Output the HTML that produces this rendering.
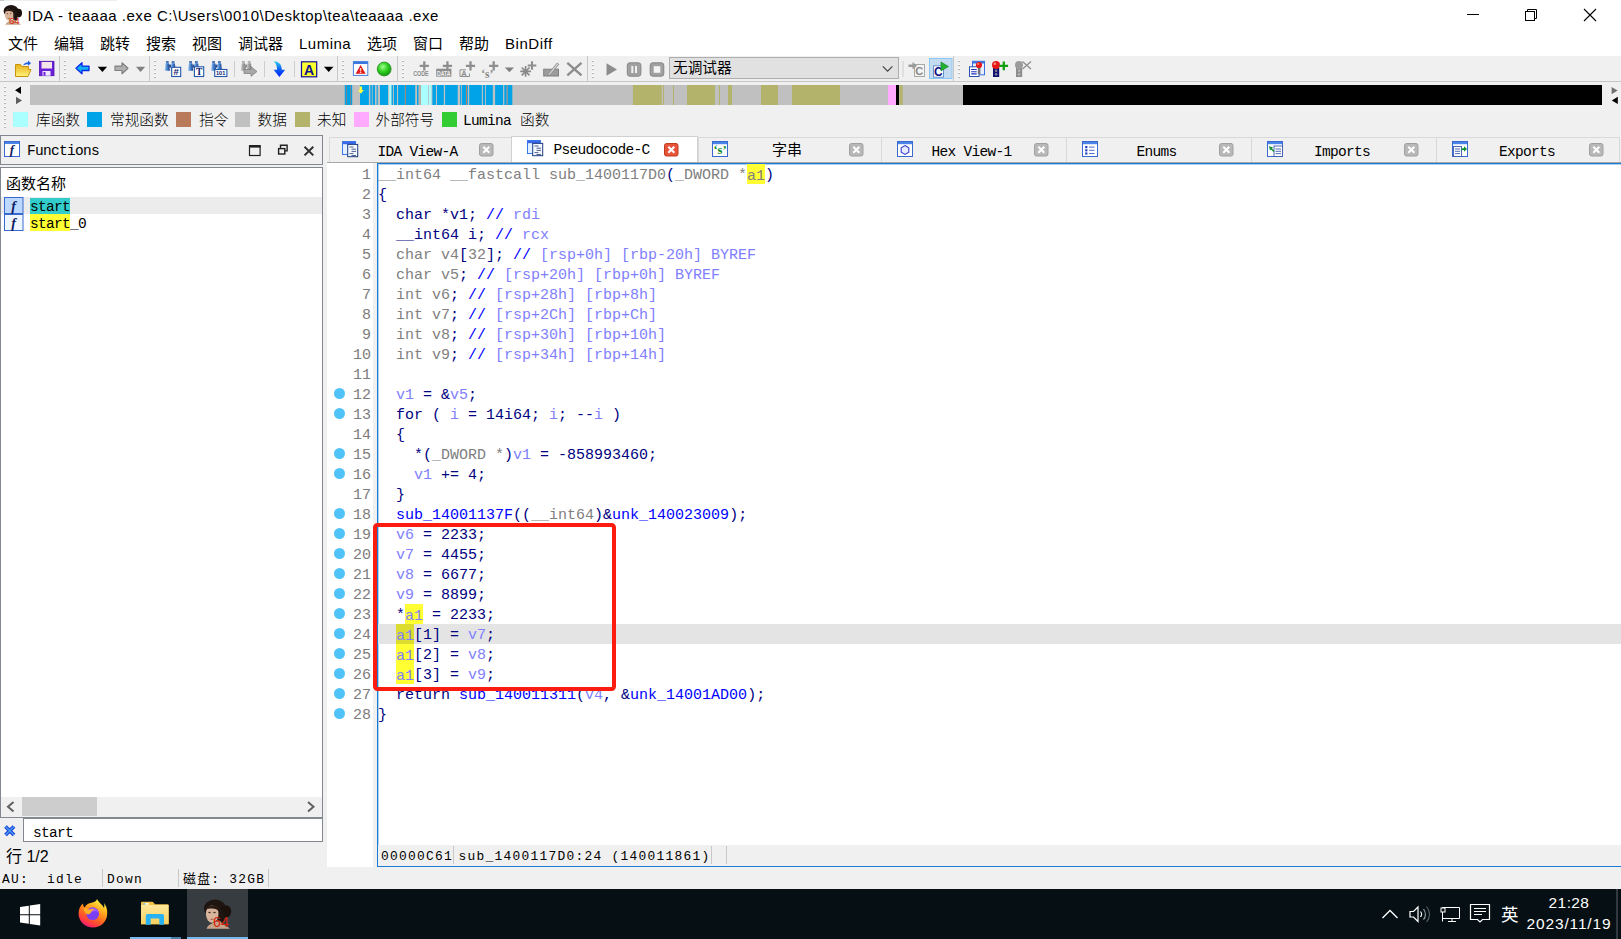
<!DOCTYPE html>
<html><head><meta charset="utf-8"><title>IDA</title>
<style>
*{box-sizing:border-box;margin:0;padding:0}
html,body{width:1621px;height:939px;overflow:hidden;background:#f0f0f0}
body{position:relative;font-family:"Liberation Sans","Noto Sans CJK SC",sans-serif;color:#000}
.abs{position:absolute}
#titlebar{left:0;top:0;width:1621px;height:30px;background:#fff}
#title{left:27.5px;top:6px;font-size:15px;letter-spacing:0.52px;line-height:20px;white-space:pre}
#menubar{left:0;top:30px;width:1621px;height:26px;background:#fff}
#menubar span{position:absolute;top:3.5px;font-size:15px;line-height:20px;white-space:pre}
#toolbar{left:0;top:56px;width:1621px;height:26px;background:#f0f0f0;border-bottom:1px solid #c6c6c6}
.vsep{position:absolute;top:56px;width:1px;height:25px;background:#c8c8c8}
.tsep{position:absolute;top:61px;width:1px;height:16px;background:#cfcfcf}
.grip{position:absolute;width:2px;height:18px;background:repeating-linear-gradient(#fdfdfd 0 1px,#b4b4b4 1px 2px,transparent 2px 4px)}
.mono{font-family:"Liberation Mono","Noto Sans CJK SC",monospace}
.sim{font-family:"Liberation Mono","Noto Sans CJK SC",monospace;font-size:14.5px;letter-spacing:-0.7px;white-space:pre}
.cjk{font-family:"Liberation Sans","Noto Sans CJK SC",sans-serif;font-size:14.67px;white-space:pre}
</style></head><body>
<!-- SECTION:title -->
<div id="titlebar" class="abs"></div>
<svg class="abs" style="left:0;top:0" width="1621" height="30" viewBox="0 0 1621 30">
<rect x="0" y="0" width="117" height="1" fill="#ededed"/><rect x="0" y="0" width="4" height="1" fill="#c8c8c8"/>
<g transform="translate(2.2,4.6)"><g transform="scale(0.68)"><ellipse cx="13" cy="9.5" rx="11" ry="9" fill="#1e1410"/><ellipse cx="24" cy="12.5" rx="5.2" ry="6.3" fill="#1a110d"/><path d="M17 8c4 2 6 8 5 15l-6 1z" fill="#1e1410"/><path d="M4.5 29.8c1.5-4 5-5 8-6.5l5.5-1.5c2 4 7 5 10 8z" fill="#c9a48c"/><ellipse cx="10.2" cy="15" rx="6.3" ry="8.8" fill="#d8b49c"/><path d="M4.5 10c2-4 8-5 12-2l1 5c-2-3-6-4-9-3.5z" fill="#2a1a14"/><ellipse cx="7.5" cy="13.5" rx="1.3" ry="0.7" fill="#4a3428"/><ellipse cx="12.5" cy="13.5" rx="1.3" ry="0.7" fill="#4a3428"/><path d="M8.5 20.3h3" stroke="#a0503c" stroke-width="0.9"/></g><text x="6.7" y="19.1" font-family="Liberation Sans,sans-serif" font-size="9.8" fill="#d82408">64</text></g>
<path d="M1467 14.5h12" stroke="#000" stroke-width="1"/>
<path d="M1527.5 11.5v-2h9v9h-2" fill="none" stroke="#000" stroke-width="1"/><rect x="1525.5" y="11.5" width="9" height="9" fill="none" stroke="#000" stroke-width="1"/>
<path d="M1584 9l12 12M1596 9l-12 12" stroke="#000" stroke-width="1.1"/>
</svg>
<div id="title" class="abs">IDA - teaaaa .exe C:\Users\0010\Desktop\tea\teaaaa .exe</div>
<!-- SECTION:menu -->
<div id="menubar" class="abs">
<span style="left:8px">文件</span><span style="left:54px">编辑</span><span style="left:100px">跳转</span><span style="left:146px">搜索</span><span style="left:192px">视图</span><span style="left:238px">调试器</span><span style="left:299px;letter-spacing:.5px">Lumina</span><span style="left:367px">选项</span><span style="left:413px">窗口</span><span style="left:459px">帮助</span><span style="left:505px;letter-spacing:.55px">BinDiff</span>
</div>
<!-- SECTION:toolbar -->
<div id="toolbar" class="abs"></div>
<svg class="abs" style="left:0;top:56px" width="1621" height="26" viewBox="0 56 1621 26">
<defs>
<linearGradient id="gFold" x1="0" y1="0" x2="0" y2="1"><stop offset="0" stop-color="#e8b018"/><stop offset="1" stop-color="#fff27a"/></linearGradient>
<linearGradient id="gBino" x1="0" y1="0" x2="1" y2="0"><stop offset="0" stop-color="#a8d0f8"/><stop offset="0.45" stop-color="#4a86d0"/><stop offset="1" stop-color="#163c88"/></linearGradient>
<linearGradient id="gBinoG" x1="0" y1="0" x2="1" y2="0"><stop offset="0" stop-color="#d0d0d0"/><stop offset="0.5" stop-color="#9a9a9a"/><stop offset="1" stop-color="#808080"/></linearGradient>
<linearGradient id="gDown" x1="0" y1="0" x2="0" y2="1"><stop offset="0" stop-color="#30d0f0"/><stop offset="0.5" stop-color="#1060f0"/><stop offset="1" stop-color="#0020ff"/></linearGradient>
<radialGradient id="gGreen" cx="0.4" cy="0.35" r="0.7"><stop offset="0" stop-color="#a0ff90"/><stop offset="0.5" stop-color="#30d020"/><stop offset="1" stop-color="#109010"/></radialGradient>


</defs>
<!-- folder open -->
<path d="M15.5 64.5h5l1.5 2h6.5v3h2.5l-3 7h-12.5z" fill="url(#gFold)" stroke="#c89410" stroke-width="1"/>
<path d="M23 65.5c1-2.5 3-3.3 5-3.3v-1.6l3 2.6-3 2.6v-1.6c-1.6 0-3.2.4-5 1.3z" fill="#2060e0"/>
<!-- save -->
<rect x="39.5" y="61.3" width="14.5" height="14.4" fill="#6a20d8" stroke="#5010b0" stroke-width="0.8"/>
<rect x="41.5" y="62" width="10.5" height="6.5" fill="#f4e4e8"/>
<rect x="42.5" y="71" width="8" height="4.7" fill="#f0e8ff"/><rect x="43.5" y="72" width="2" height="3.7" fill="#6a20d8"/>
<!-- back arrow -->
<path d="M76 68.3l6-5.5v3.3h7v4.4h-7v3.3z" fill="#10b0f0" stroke="#0828e8" stroke-width="1.3" stroke-linejoin="round"/>
<path d="M97.7 66.8h9.4l-4.7 5.2z" fill="#000"/>
<path d="M128 68.3l-6-5.5v3.3h-7v4.4h7v3.3z" fill="#b0b0b0" stroke="#808080" stroke-width="1.2" stroke-linejoin="round"/>
<path d="M136 66.8h9.2l-4.6 5.2z" fill="#808080"/>
<!-- binoculars -->
<g transform="translate(164.7,61)"><rect x="1.2" y="0" width="2.8" height="2.6" fill="#4878c0"/><rect x="7" y="0" width="2.8" height="2.6" fill="#4878c0"/><rect x="4.4" y="3.6" width="2.4" height="3" fill="#2a4a90"/><path d="M.9 2.4h3.5l.8 7.4H0z" fill="url(#gBino)"/><path d="M6.7 2.4h3.5l.8 7.4H5.8z" fill="url(#gBino)"/></g>
<rect x="171.7" y="67.3" width="9" height="9.2" fill="#fff" stroke="#2458a8" stroke-width="1.1"/>
<text x="176.2" y="75.4" text-anchor="middle" font-family="Liberation Sans,sans-serif" font-weight="bold" font-size="9.5" fill="#102070">#</text>
<g transform="translate(188,61)"><rect x="1.2" y="0" width="2.8" height="2.6" fill="#4878c0"/><rect x="7" y="0" width="2.8" height="2.6" fill="#4878c0"/><rect x="4.4" y="3.6" width="2.4" height="3" fill="#2a4a90"/><path d="M.9 2.4h3.5l.8 7.4H0z" fill="url(#gBino)"/><path d="M6.7 2.4h3.5l.8 7.4H5.8z" fill="url(#gBino)"/></g>
<rect x="194.4" y="66.8" width="9.3" height="9.7" fill="#fff" stroke="#2458a8" stroke-width="1.1"/>
<text x="199.1" y="75.3" text-anchor="middle" font-family="Liberation Serif,serif" font-weight="bold" font-size="9.5" fill="#102070">T</text>
<g transform="translate(211,61)"><rect x="1.2" y="0" width="2.8" height="2.6" fill="#4878c0"/><rect x="7" y="0" width="2.8" height="2.6" fill="#4878c0"/><rect x="4.4" y="3.6" width="2.4" height="3" fill="#2a4a90"/><path d="M.9 2.4h3.5l.8 7.4H0z" fill="url(#gBino)"/><path d="M6.7 2.4h3.5l.8 7.4H5.8z" fill="url(#gBino)"/></g>
<rect x="214.7" y="69.5" width="12.2" height="7" fill="#fff" stroke="#2458a8" stroke-width="1.1"/>
<text x="216" y="75.3" font-family="Liberation Sans,sans-serif" font-weight="bold" font-size="5.6" fill="#102070">101</text>
<rect x="234" y="61" width="1" height="16" fill="#cdcdcd"/>
<g transform="translate(240.8,61)"><rect x="1.2" y="0" width="2.8" height="2.6" fill="#b0b0b0"/><rect x="7" y="0" width="2.8" height="2.6" fill="#b0b0b0"/><rect x="4.4" y="3.6" width="2.4" height="3" fill="#909090"/><path d="M.9 2.4h3.5l.8 7.4H0z" fill="url(#gBinoG)"/><path d="M6.7 2.4h3.5l.8 7.4H5.8z" fill="url(#gBinoG)"/></g>
<path d="M244 69.5h7v-2.8l6 4.8-6 4.8v-2.8h-7z" fill="#a8a8a8" stroke="#808080" stroke-width="0.8"/>
<rect x="264" y="61" width="1" height="16" fill="#cdcdcd"/>
<!-- blue down arrow -->
<path d="M273.5 61.2c5 0 8.3 2.8 8.3 8.6h3.4l-5.8 7.2-5.8-7.2h3.4c0-4-1-6.6-3.5-8.6z" fill="url(#gDown)"/>
<rect x="294" y="61" width="1" height="16" fill="#cdcdcd"/>
<!-- A -->
<rect x="301.5" y="61.8" width="15.2" height="15" fill="#ffff30" stroke="#101090" stroke-width="1.2"/>
<text x="309.1" y="74.6" text-anchor="middle" font-family="Liberation Sans,sans-serif" font-weight="bold" font-size="14" fill="#101090">A</text>
<path d="M323.9 66.8h9.6l-4.8 5.2z" fill="#000"/>
<!-- red triangle window -->
<rect x="353.4" y="61.6" width="14.4" height="13.8" fill="#fff" stroke="#4a80e0" stroke-width="1"/>
<rect x="353.4" y="61.6" width="14.4" height="2.4" fill="#3a78e0"/>
<path d="M360.6 65l5 8.8h-10z" fill="#e01818"/>
<text x="360.6" y="73.2" text-anchor="middle" font-family="Liberation Sans,sans-serif" font-weight="bold" font-size="7" fill="#fff">!</text>
<!-- green -->
<circle cx="384.2" cy="69" r="6.9" fill="url(#gGreen)" stroke="#208a18" stroke-width="0.8"/>
<!-- gray icons: CODE -->
<path d="M424.3 61.300000000000004v9.2M419.7 65.9h9.2" stroke="#8e8e8e" stroke-width="2.3" fill="none"/><path d="M447.4 61.300000000000004v9.2M442.79999999999995 65.9h9.2" stroke="#8e8e8e" stroke-width="2.3" fill="none"/><path d="M470.5 61.300000000000004v9.2M465.9 65.9h9.2" stroke="#8e8e8e" stroke-width="2.3" fill="none"/><path d="M493.7 61.300000000000004v9.2M489.09999999999997 65.9h9.2" stroke="#8e8e8e" stroke-width="2.3" fill="none"/><path d="M532 61.2v8.6M527.7 65.5h8.6" stroke="#8e8e8e" stroke-width="2.1" fill="none"/>
<text x="413.2" y="76.2" font-family="Liberation Sans,sans-serif" font-weight="bold" font-size="8" fill="#8a8a8a" textLength="15.5" lengthAdjust="spacingAndGlyphs">CODE</text>
<rect x="436.2" y="68.7" width="15.2" height="8" fill="#8e8e8e"/>
<text x="437" y="75.8" font-family="Liberation Sans,sans-serif" font-weight="bold" font-size="7.5" fill="#f0f0f0" textLength="13.6" lengthAdjust="spacingAndGlyphs">DATA</text>
<path d="M466 69.8h-6v6.7h9.5v-3" fill="none" stroke="#8e8e8e" stroke-width="1"/>
<text x="461.2" y="76" font-family="Liberation Sans,sans-serif" font-weight="bold" font-size="7.5" fill="#8a8a8a">A</text>
<text x="481.2" y="77.5" font-family="Liberation Serif,serif" font-weight="bold" font-size="11.5" fill="#8a8a8a">‘s’</text>
<path d="M504.8 67.6h9.2l-4.6 4.6z" fill="#808080"/>
<path d="M521.7 67.5l7.8 7.8M529.5 67.5l-7.8 7.8M525.6 66v10.8M520.2 71.400h10.8" stroke="#8a8a8a" stroke-width="1.7" fill="none"/>
<rect x="543.7" y="69.2" width="14.8" height="6.8" fill="#9c9c9c" stroke="#808080" stroke-width="1"/>
<path d="M548.5 73.5l8.7-10.5 1.7 1.400-8.7 10.5-2.5.9z" fill="#d0d0d0" stroke="#808080" stroke-width="0.8"/>
<path d="M567.300 62.8l14.2 12.6M581.5 62.8l-14.2 12.6" stroke="#8c8c8c" stroke-width="2.300" fill="none"/>
<!-- play pause stop -->
<path d="M606.5 63.3l10.5 6.2-10.5 6.2z" fill="#8c8c8c"/>
<rect x="627.3" y="62.8" width="13.6" height="13.4" rx="2.5" fill="#a0a0a0" stroke="#858585" stroke-width="1"/>
<rect x="631.3" y="66" width="2" height="7" fill="#f0f0f0"/><rect x="635" y="66" width="2" height="7" fill="#f0f0f0"/>
<rect x="650.2" y="62.8" width="13.6" height="13.4" rx="2.5" fill="#a0a0a0" stroke="#858585" stroke-width="1"/>
<rect x="653.7" y="66.2" width="6.6" height="6.6" fill="#f4f4f4"/>
<!-- combobox -->
<rect x="669.5" y="57.5" width="229" height="21" fill="#e1e1e1" stroke="#adadad" stroke-width="1"/>
<path d="M882.8 66.3l4.8 4.8 4.8-4.8" fill="none" stroke="#404040" stroke-width="1.1"/>
<rect x="902.5" y="61" width="1" height="16" fill="#cdcdcd"/>
<!-- arrow C gray -->
<rect x="914.5" y="64.5" width="10" height="12" fill="#f4f4f4" stroke="#a8a8a8" stroke-width="1"/>
<text x="915.2" y="75.3" font-family="Liberation Sans,sans-serif" font-weight="bold" font-size="11" fill="#8a8a8a">C</text>
<path d="M908.5 64.5h4v-2.5l4.5 3.8-4.5 3.8v-2.5h-4z" fill="#9a9a9a"/>
<!-- selected C play -->
<rect x="929.5" y="58.5" width="22.5" height="20" fill="#c4dcf2" stroke="#8cc6f4" stroke-width="1"/>
<rect x="933.5" y="65.8" width="10" height="11.4" fill="#fff" stroke="#6a90d0" stroke-width="1"/>
<text x="934" y="76" font-family="Liberation Sans,sans-serif" font-weight="bold" font-size="12" fill="#101080">C</text>
<path d="M941 62l7.5 4.5-7.5 4.5z" fill="#22b032" stroke="#108020" stroke-width="0.6"/>
<!-- icons right -->
<rect x="972.5" y="61.3" width="12" height="13.5" fill="#e8f0ff" stroke="#3a70e0" stroke-width="1"/><rect x="972.5" y="61.3" width="12" height="2.2" fill="#3a70e0"/>
<rect x="969.5" y="66.8" width="9.5" height="9.7" fill="#fff" stroke="#2a50b0" stroke-width="1"/>
<path d="M971.2 69.5h5.5M971.2 71.7h5.5M971.2 73.9h5.5" stroke="#1a30c0" stroke-width="1.1"/>
<rect x="977.8" y="67.5" width="2.6" height="6.5" fill="#707078"/><circle cx="979" cy="65" r="3.1" fill="#e81818"/><circle cx="978.2" cy="64.1" r="1" fill="#ff9080"/>
<rect x="993" y="68" width="6.2" height="9" fill="#101070"/><circle cx="996.1" cy="70.8" r="1.3" fill="#808090"/><circle cx="996.1" cy="74.3" r="1.3" fill="#808090"/>
<circle cx="996" cy="65" r="4" fill="#e81818"/><circle cx="994.8" cy="63.8" r="1.3" fill="#ff9080"/>
<path d="M1003.8 61.6v8.6M999.5 65.9h8.6" stroke="#12a012" stroke-width="2.3"/>
<rect x="1016" y="68" width="6.2" height="9" fill="#8c8c8c"/><circle cx="1019" cy="65" r="4" fill="#9c9c9c"/><circle cx="1019.1" cy="70.8" r="1.3" fill="#b4b4b4"/><circle cx="1019.1" cy="74.3" r="1.3" fill="#b4b4b4"/>
<path d="M1022.5 61.5l8.5 7.5M1031 61.5l-8.5 7.5" stroke="#909090" stroke-width="1.3"/>
</svg>
<div class="vsep" style="left:59px"></div><div class="vsep" style="left:149px"></div><div class="vsep" style="left:337px"></div><div class="vsep" style="left:397px"></div><div class="vsep" style="left:587px"></div><div class="vsep" style="left:953px"></div>
<div class="grip" style="left:4px;top:60px"></div><div class="grip" style="left:64px;top:60px"></div><div class="grip" style="left:154px;top:60px"></div><div class="grip" style="left:342px;top:60px"></div><div class="grip" style="left:402px;top:60px"></div><div class="grip" style="left:592px;top:60px"></div><div class="grip" style="left:958px;top:60px"></div>
<div class="abs cjk" style="left:673px;top:58px;line-height:20px">无调试器</div>
<!-- SECTION:nav -->
<svg class="abs" style="left:0;top:82px" width="1621" height="28" viewBox="0 82 1621 28">
<rect x="30" y="85" width="1572" height="20" fill="#c0c0c0"/>
<rect x="344.8" y="85" width="7.4" height="20" fill="#00a2e8"/>
<rect x="346.3" y="85" width="0.6" height="20" fill="#b87a5a"/>
<rect x="350.0" y="85" width="0.6" height="20" fill="#b87a5a"/>
<rect x="360.0" y="85" width="8.9" height="20" fill="#00a2e8"/>
<rect x="370.3" y="85" width="1.5" height="20" fill="#00a2e8"/>
<rect x="372.6" y="85" width="2.4" height="20" fill="#00a2e8"/>
<rect x="376.6" y="85" width="1.1" height="20" fill="#00a2e8"/>
<rect x="380.0" y="85" width="8.0" height="20" fill="#00a2e8"/>
<rect x="389.2" y="85" width="2.4" height="20" fill="#aaffff"/>
<rect x="391.6" y="85" width="1.3" height="20" fill="#00a2e8"/>
<rect x="393.9" y="85" width="3.1" height="20" fill="#00a2e8"/>
<rect x="398.1" y="85" width="6.8" height="20" fill="#00a2e8"/>
<rect x="405.0" y="85" width="0.9" height="20" fill="#b87a5a"/>
<rect x="405.9" y="85" width="9.3" height="20" fill="#00a2e8"/>
<rect x="417.0" y="85" width="1.5" height="20" fill="#00a2e8"/>
<rect x="419.8" y="85" width="0.9" height="20" fill="#b87a5a"/>
<rect x="420.7" y="85" width="7.4" height="20" fill="#aaffff"/>
<rect x="429.0" y="85" width="2.4" height="20" fill="#aaffff"/>
<rect x="432.4" y="85" width="3.5" height="20" fill="#00a2e8"/>
<rect x="437.0" y="85" width="6.8" height="20" fill="#00a2e8"/>
<rect x="445.1" y="85" width="12.6" height="20" fill="#00a2e8"/>
<rect x="460.1" y="85" width="0.9" height="20" fill="#00a2e8"/>
<rect x="461.8" y="85" width="4.3" height="20" fill="#00a2e8"/>
<rect x="466.0" y="85" width="0.9" height="20" fill="#b87a5a"/>
<rect x="467.0" y="85" width="0.9" height="20" fill="#00a2e8"/>
<rect x="469.2" y="85" width="12.6" height="20" fill="#00a2e8"/>
<rect x="482.9" y="85" width="2.2" height="20" fill="#00a2e8"/>
<rect x="486.0" y="85" width="6.8" height="20" fill="#00a2e8"/>
<rect x="495.1" y="85" width="8.0" height="20" fill="#00a2e8"/>
<rect x="504.3" y="85" width="2.4" height="20" fill="#00a2e8"/>
<rect x="506.8" y="85" width="0.9" height="20" fill="#b87a5a"/>
<rect x="507.7" y="85" width="4.6" height="20" fill="#00a2e8"/>
<rect x="632.9" y="85" width="28.8" height="20" fill="#b3b36b"/>
<rect x="663" y="85" width="1.0" height="20" fill="#b3b36b"/>
<rect x="673" y="85" width="1.0" height="20" fill="#b3b36b"/>
<rect x="687" y="85" width="28.0" height="20" fill="#b3b36b"/>
<rect x="719" y="85" width="1.0" height="20" fill="#b3b36b"/>
<rect x="728" y="85" width="4.0" height="20" fill="#b3b36b"/>
<rect x="761" y="85" width="17.0" height="20" fill="#b3b36b"/>
<rect x="792" y="85" width="48.0" height="20" fill="#b3b36b"/>
<rect x="899.4" y="85" width="3.3" height="20" fill="#b3b36b"/>
<rect x="888" y="85" width="8" height="20" fill="#ffaaff"/>
<rect x="896" y="85" width="3" height="20" fill="#000"/>
<rect x="963" y="85" width="639" height="20" fill="#000"/>
<path d="M358 90h1.7v-3.5h2.4v3.5h1.7l-2.9 3.8z" fill="#ffff40"/>
<path d="M21 86.5v7.5l-6-3.75z" fill="#000"/><path d="M16 96.8v7.4l6-3.7z" fill="#606060"/>
<path d="M1611.6 87v7.2l6-3.6z" fill="#707070"/><path d="M1617.8 96.8v7.2l-6-3.6z" fill="#000"/>
</svg>
<div class="grip" style="left:4px;top:86px;height:42px"></div>
<!-- SECTION:legend -->
<div class="abs" style="left:13px;top:112px;width:15px;height:15px;background:#aaffff"></div><div class="abs cjk" style="left:36px;top:109.7px;line-height:20px;font-weight:300;color:#000">库函数</div><div class="abs" style="left:87px;top:112px;width:15px;height:15px;background:#00a2e8"></div><div class="abs cjk" style="left:110px;top:109.7px;line-height:20px;font-weight:300;color:#000">常规函数</div><div class="abs" style="left:176px;top:112px;width:15px;height:15px;background:#b87a5a"></div><div class="abs cjk" style="left:199px;top:109.7px;line-height:20px;font-weight:300;color:#000">指令</div><div class="abs" style="left:235px;top:112px;width:15px;height:15px;background:#c0c0c0"></div><div class="abs cjk" style="left:257.5px;top:109.7px;line-height:20px;font-weight:300;color:#000">数据</div><div class="abs" style="left:294.5px;top:112px;width:15px;height:15px;background:#b3b36b"></div><div class="abs cjk" style="left:317px;top:109.7px;line-height:20px;font-weight:300;color:#000">未知</div><div class="abs" style="left:353.5px;top:112px;width:15px;height:15px;background:#ffaaff"></div><div class="abs cjk" style="left:375.5px;top:109.7px;line-height:20px;font-weight:300;color:#000">外部符号</div><div class="abs" style="left:442px;top:112px;width:15px;height:15px;background:#33cc33"></div><div class="abs sim" style="left:463px;top:111px;line-height:20px">Lumina</div><div class="abs cjk" style="left:520px;top:109.7px;line-height:20px;font-weight:300;color:#000">函数</div>
<!-- SECTION:left -->
<div class="abs" style="left:0;top:135px;width:323px;height:30px;border:1px solid #828790;background:#f0f0f0"></div>
<svg class="abs" style="left:4px;top:141px" width="18" height="17" viewBox="0 0 18 17"><rect x="0.5" y="0.5" width="15" height="15" fill="#fff" stroke="#3a6ad0"/><rect x="1" y="1" width="14" height="2" fill="#4a84e8"/><text x="8" y="13" text-anchor="middle" font-family="Liberation Serif,serif" font-style="italic" font-weight="bold" font-size="13" fill="#102060">f</text></svg>
<div class="abs sim" style="left:27px;top:141px;line-height:20px">Functions</div>
<svg class="abs" style="left:245px;top:141px" width="75" height="18" viewBox="245 141 75 18"><rect x="249.5" y="146" width="10.6" height="9.5" fill="none" stroke="#202020" stroke-width="1.2"/><rect x="249" y="145" width="11.6" height="2.6" fill="#202020"/>
<path d="M280.5 148.5v-3.2h6.6v5.6h-2.5" fill="none" stroke="#202020" stroke-width="1.4"/><rect x="278.6" y="148.6" width="6.2" height="5.4" fill="none" stroke="#202020" stroke-width="1.4"/>
<path d="M304.5 146.8l8.8 8.6M313.3 146.8l-8.8 8.6" stroke="#303030" stroke-width="2"/></svg>
<div class="abs" style="left:0;top:167px;width:323px;height:651px;border:1px solid #828790;background:#fff"></div>
<div class="abs cjk" style="left:6px;top:174px;line-height:20px;font-size:15px">函数名称</div>
<div class="abs" style="left:1px;top:197px;width:321px;height:17px;background:#ececec"></div>
<svg class="abs" style="left:4px;top:197px" width="20" height="34" viewBox="0 0 20 34"><rect x="0.5" y="0.5" width="18.5" height="16" fill="#bcd8ff" stroke="#3a6ad0"/><text x="9.5" y="13.5" text-anchor="middle" font-family="Liberation Serif,serif" font-style="italic" font-weight="bold" font-size="14" fill="#102060">f</text>
<rect x="0.5" y="17.5" width="18.5" height="16" fill="#eef6ff" stroke="#3a6ad0"/><text x="9.5" y="30.5" text-anchor="middle" font-family="Liberation Serif,serif" font-style="italic" font-weight="bold" font-size="14" fill="#102060">f</text></svg>
<div class="abs" style="left:30px;top:198px;width:40px;height:16px;background:#33cccc"></div>
<div class="abs" style="left:30px;top:214px;width:40px;height:17px;background:#ffff33"></div>
<div class="abs sim" style="left:30px;top:197px;line-height:20px">start</div>
<div class="abs sim" style="left:30px;top:214px;line-height:20px">start_0</div>
<div class="abs" style="left:1px;top:797px;width:321px;height:20px;background:#f0f0f0"></div>
<div class="abs" style="left:22px;top:797px;width:75px;height:19px;background:#cdcdcd"></div>
<svg class="abs" style="left:0;top:797px" width="323" height="20" viewBox="0 797 323 20"><path d="M13.5 802l-5.5 4.8 5.5 4.8" fill="none" stroke="#606060" stroke-width="2"/><path d="M308 802l5.5 4.8-5.5 4.8" fill="none" stroke="#606060" stroke-width="2"/></svg>
<div class="abs" style="left:23px;top:818px;width:300px;height:24px;border:1px solid #828790;background:#fff"></div>
<svg class="abs" style="left:3px;top:824px" width="14" height="14" viewBox="0 0 14 14"><path d="M2.5 2.5l8.5 8.5M11 2.5l-8.5 8.5" stroke="#1a40d8" stroke-width="3.8" stroke-linecap="butt"/><path d="M2.5 2.5l8.5 8.5M11 2.5l-8.5 8.5" stroke="#4aa0f0" stroke-width="1.4" stroke-linecap="butt"/></svg>
<div class="abs sim" style="left:33px;top:822.5px;line-height:20px">start</div>
<div class="abs" style="left:6px;top:847px;font-size:16px;line-height:20px;white-space:pre">行 1/2</div>
<!-- SECTION:tabs -->
<div class="abs" style="left:329px;top:137px;width:183px;height:26px;background:#f0f0f0;border:1px solid #d9d9d9;border-bottom:1px solid #c8c8c8"></div><div class="abs sim" style="left:377.5px;top:141.5px;line-height:20px">IDA View-A</div><svg class="abs" style="left:479px;top:143px" width="15" height="14" viewBox="0 0 15 14"><rect x="0.5" y="0.5" width="13.5" height="12.5" rx="2" fill="#b8b8b8" stroke="#a0a0a0"/><path d="M4.3 3.8l6 6M10.3 3.8l-6 6" stroke="#fff" stroke-width="2"/></svg>
<div class="abs" style="left:698px;top:137px;width:184px;height:26px;background:#f0f0f0;border:1px solid #d9d9d9;border-bottom:1px solid #c8c8c8"></div><div class="abs cjk" style="left:772px;top:140px;line-height:20px;font-size:15px">字串</div><svg class="abs" style="left:848.5px;top:143px" width="15" height="14" viewBox="0 0 15 14"><rect x="0.5" y="0.5" width="13.5" height="12.5" rx="2" fill="#b8b8b8" stroke="#a0a0a0"/><path d="M4.3 3.8l6 6M10.3 3.8l-6 6" stroke="#fff" stroke-width="2"/></svg>
<div class="abs" style="left:881px;top:137px;width:186px;height:26px;background:#f0f0f0;border:1px solid #d9d9d9;border-bottom:1px solid #c8c8c8"></div><div class="abs sim" style="left:931.5px;top:141.5px;line-height:20px">Hex View-1</div><svg class="abs" style="left:1034px;top:143px" width="15" height="14" viewBox="0 0 15 14"><rect x="0.5" y="0.5" width="13.5" height="12.5" rx="2" fill="#b8b8b8" stroke="#a0a0a0"/><path d="M4.3 3.8l6 6M10.3 3.8l-6 6" stroke="#fff" stroke-width="2"/></svg>
<div class="abs" style="left:1066px;top:137px;width:186px;height:26px;background:#f0f0f0;border:1px solid #d9d9d9;border-bottom:1px solid #c8c8c8"></div><div class="abs sim" style="left:1136.5px;top:141.5px;line-height:20px">Enums</div><svg class="abs" style="left:1219px;top:143px" width="15" height="14" viewBox="0 0 15 14"><rect x="0.5" y="0.5" width="13.5" height="12.5" rx="2" fill="#b8b8b8" stroke="#a0a0a0"/><path d="M4.3 3.8l6 6M10.3 3.8l-6 6" stroke="#fff" stroke-width="2"/></svg>
<div class="abs" style="left:1251px;top:137px;width:186px;height:26px;background:#f0f0f0;border:1px solid #d9d9d9;border-bottom:1px solid #c8c8c8"></div><div class="abs sim" style="left:1314px;top:141.5px;line-height:20px">Imports</div><svg class="abs" style="left:1404px;top:143px" width="15" height="14" viewBox="0 0 15 14"><rect x="0.5" y="0.5" width="13.5" height="12.5" rx="2" fill="#b8b8b8" stroke="#a0a0a0"/><path d="M4.3 3.8l6 6M10.3 3.8l-6 6" stroke="#fff" stroke-width="2"/></svg>
<div class="abs" style="left:1436px;top:137px;width:184px;height:26px;background:#f0f0f0;border:1px solid #d9d9d9;border-bottom:1px solid #c8c8c8"></div><div class="abs sim" style="left:1499px;top:141.5px;line-height:20px">Exports</div><svg class="abs" style="left:1589px;top:143px" width="15" height="14" viewBox="0 0 15 14"><rect x="0.5" y="0.5" width="13.5" height="12.5" rx="2" fill="#b8b8b8" stroke="#a0a0a0"/><path d="M4.3 3.8l6 6M10.3 3.8l-6 6" stroke="#fff" stroke-width="2"/></svg>
<div class="abs" style="left:511px;top:135.5px;width:187px;height:28.5px;background:#fff;border:1px solid #d0d0d0;border-bottom:none"></div><div class="abs sim" style="left:553.5px;top:140.3px;line-height:20px">Pseudocode-C</div><svg class="abs" style="left:664px;top:142.5px" width="15" height="14" viewBox="0 0 15 14"><rect x="0.5" y="0.5" width="13.5" height="12.5" rx="2" fill="#e8543a" stroke="#c03a20"/><path d="M4.3 3.8l6 6M10.3 3.8l-6 6" stroke="#fff" stroke-width="2"/></svg>
<svg class="abs" style="left:342px;top:141px" width="17" height="17" viewBox="0 0 17 17"><rect x="0.5" y="0.5" width="13" height="13" fill="#e4f0ff" stroke="#3a78e8"/><rect x="1" y="1" width="12" height="2.2" fill="#3a68e8"/><rect x="5.7" y="3.4" width="10" height="12.3" fill="#f4f8ff" stroke="#1c3c80"/><path d="M7.5 6h4M9.5 8.2h4.5M9.5 10.4h4.5M7.5 12.6h4M9.5 14.5h4.5" stroke="#405080" stroke-width="0.9"/></svg><svg class="abs" style="left:526.5px;top:140px" width="17" height="17" viewBox="0 0 17 17"><rect x="0.5" y="0.5" width="13" height="13" fill="#e4f0ff" stroke="#3a78e8"/><rect x="1" y="1" width="12" height="2.2" fill="#3a68e8"/><rect x="5.7" y="3.4" width="10" height="12.3" fill="#f4f8ff" stroke="#1c3c80"/><path d="M7.5 6h4M9.5 8.2h4.5M9.5 10.4h4.5M7.5 12.6h4M9.5 14.5h4.5" stroke="#405080" stroke-width="0.9"/></svg><svg class="abs" style="left:712px;top:140.5px" width="17" height="17" viewBox="0 0 17 17"><rect x="0.5" y="0.5" width="15" height="15" fill="#fff" stroke="#3a6ad0"/><rect x="1" y="1" width="14" height="2.2" fill="#4a84e8"/><text x="8" y="13" text-anchor="middle" font-family="Liberation Serif,serif" font-weight="bold" font-size="12.5" fill="#0a8a28">‘s’</text></svg><svg class="abs" style="left:896.5px;top:140.5px" width="17" height="17" viewBox="0 0 17 17"><rect x="0.5" y="0.5" width="15" height="15" fill="#fff" stroke="#3a6ad0"/><rect x="1" y="1" width="14" height="2.2" fill="#4a84e8"/><path d="M8 4.6l3.8 2.2v4.4L8 13.4l-3.8-2.2V6.8z" fill="#e8ecff" stroke="#3040d0" stroke-width="1.1"/></svg><svg class="abs" style="left:1081.5px;top:140.5px" width="17" height="17" viewBox="0 0 17 17"><rect x="0.5" y="0.5" width="15" height="15" fill="#fff" stroke="#3a6ad0"/><rect x="1" y="1" width="14" height="2.2" fill="#4a84e8"/><rect x="3.2" y="5" width="2.2" height="2.2" fill="#2040c0"/><rect x="3.2" y="8.2" width="2.2" height="2.2" fill="#2040c0"/><rect x="3.2" y="11.4" width="2.2" height="2.2" fill="#2040c0"/><path d="M7 6.1h5.5M7 9.3h5.5M7 12.5h5.5" stroke="#5070c8" stroke-width="1"/></svg><svg class="abs" style="left:1266.5px;top:140.5px" width="17" height="17" viewBox="0 0 17 17"><rect x="0.5" y="0.5" width="15" height="15" fill="#fff" stroke="#3a6ad0"/><rect x="1" y="1" width="14" height="2.2" fill="#4a84e8"/><rect x="7" y="5" width="8.5" height="10.5" fill="#fff" stroke="#3a5ab0" stroke-width="0.9"/><path d="M8.5 8h5.5M8.5 10.3h5.5M8.5 12.6h5.5" stroke="#3a5ab0" stroke-width="0.9"/><path d="M2 5l4 1.5-1 1 2.5 2.5-1 1L4 8.5l-1 1z" fill="#109030"/></svg><svg class="abs" style="left:1452px;top:140.5px" width="17" height="17" viewBox="0 0 17 17"><rect x="0.5" y="0.5" width="15" height="15" fill="#fff" stroke="#3a6ad0"/><rect x="1" y="1" width="14" height="2.2" fill="#4a84e8"/><rect x="1.5" y="5.5" width="8" height="10" fill="#fff" stroke="#3a5ab0" stroke-width="0.9"/><path d="M3 8h5M3 10.3h5M3 12.6h5" stroke="#3a5ab0" stroke-width="0.9"/><path d="M8.5 10.5c.5-2.5 2-3.5 3.5-3.5V5.2l3 2.8-3 2.8V9c-1.5 0-2.5.3-3.5 1.5z" fill="#109030"/></svg>
<!-- SECTION:code -->
<style>
#gut{left:327px;top:163px;width:46px;height:704px;background:#fff}
#codebox{left:377px;top:163px;width:1250px;height:704px;background:#fff;border:1px solid #1a7ad4;box-shadow:inset 0 0 0 1px rgba(26,122,212,.35)}
.ln{position:absolute;left:326px;width:45px;height:20px;text-align:right;font:15px/20px "Liberation Mono",monospace;color:#7c7c7c;white-space:pre}
.cl{position:absolute;left:378px;height:20px;font:15px/20px "Liberation Mono",monospace;white-space:pre;color:#000080}
.k{color:#000080}.g{color:#808080}.c{color:#0000ff}.r{color:#8080ff}.f{color:#0000ff}.h{color:#8080ff;background:#ffff33;padding-top:3.5px}.h1{color:#808080}.h24{background:#dcdc30}
.dot{position:absolute;left:334px;width:11px;height:11px;border-radius:50%;background:#4fc3f7}
</style>
<div class="abs" style="left:327px;top:162px;width:1294px;height:1px;background:#a8a8a8"></div>
<div id="gut" class="abs"></div>
<div id="codebox" class="abs"></div>
<div class="abs" style="left:378px;top:624px;width:1243px;height:20.4px;background:#e4e4e4"></div>
<div class="ln" style="top:166px">1</div><div class="cl" style="top:166px"><span class="g">__int64 __fastcall sub_1400117D0</span><span class="k">(</span><span class="g">_DWORD *</span><span class="h h1">a1</span><span class="k">)</span></div>
<div class="ln" style="top:186px">2</div><div class="cl" style="top:186px"><span class="k">{</span></div>
<div class="ln" style="top:206px">3</div><div class="cl" style="top:206px"><span class="k">  char *v1; </span><span class="c">// </span><span class="r">rdi</span></div>
<div class="ln" style="top:226px">4</div><div class="cl" style="top:226px"><span class="k">  __int64 i; </span><span class="c">// </span><span class="r">rcx</span></div>
<div class="ln" style="top:246px">5</div><div class="cl" style="top:246px"><span class="g">  char v4</span><span class="k">[</span><span class="g">32</span><span class="k">]; </span><span class="c">// </span><span class="r">[rsp+0h] [rbp-20h] BYREF</span></div>
<div class="ln" style="top:266px">6</div><div class="cl" style="top:266px"><span class="g">  char v5</span><span class="k">; </span><span class="c">// </span><span class="r">[rsp+20h] [rbp+0h] BYREF</span></div>
<div class="ln" style="top:286px">7</div><div class="cl" style="top:286px"><span class="g">  int v6</span><span class="k">; </span><span class="c">// </span><span class="r">[rsp+28h] [rbp+8h]</span></div>
<div class="ln" style="top:306px">8</div><div class="cl" style="top:306px"><span class="g">  int v7</span><span class="k">; </span><span class="c">// </span><span class="r">[rsp+2Ch] [rbp+Ch]</span></div>
<div class="ln" style="top:326px">9</div><div class="cl" style="top:326px"><span class="g">  int v8</span><span class="k">; </span><span class="c">// </span><span class="r">[rsp+30h] [rbp+10h]</span></div>
<div class="ln" style="top:346px">10</div><div class="cl" style="top:346px"><span class="g">  int v9</span><span class="k">; </span><span class="c">// </span><span class="r">[rsp+34h] [rbp+14h]</span></div>
<div class="ln" style="top:366px">11</div>
<div class="ln" style="top:386px">12</div><div class="dot" style="top:388.0px"></div><div class="cl" style="top:386px">  <span class="r">v1</span><span class="k"> = &amp;</span><span class="r">v5</span><span class="k">;</span></div>
<div class="ln" style="top:406px">13</div><div class="dot" style="top:408.0px"></div><div class="cl" style="top:406px"><span class="k">  for ( </span><span class="r">i</span><span class="k"> = 14i64; </span><span class="r">i</span><span class="k">; --</span><span class="r">i</span><span class="k"> )</span></div>
<div class="ln" style="top:426px">14</div><div class="cl" style="top:426px"><span class="k">  {</span></div>
<div class="ln" style="top:446px">15</div><div class="dot" style="top:448.0px"></div><div class="cl" style="top:446px"><span class="k">    *(</span><span class="g">_DWORD *</span><span class="k">)</span><span class="r">v1</span><span class="k"> = -858993460;</span></div>
<div class="ln" style="top:466px">16</div><div class="dot" style="top:468.0px"></div><div class="cl" style="top:466px">    <span class="r">v1</span><span class="k"> += 4;</span></div>
<div class="ln" style="top:486px">17</div><div class="cl" style="top:486px"><span class="k">  }</span></div>
<div class="ln" style="top:506px">18</div><div class="dot" style="top:508.0px"></div><div class="cl" style="top:506px">  <span class="f">sub_14001137F</span><span class="k">((</span><span class="g">__int64</span><span class="k">)&amp;</span><span class="f">unk_140023009</span><span class="k">);</span></div>
<div class="ln" style="top:526px">19</div><div class="dot" style="top:528.0px"></div><div class="cl" style="top:526px">  <span class="r">v6</span><span class="k"> = 2233;</span></div>
<div class="ln" style="top:546px">20</div><div class="dot" style="top:548.0px"></div><div class="cl" style="top:546px">  <span class="r">v7</span><span class="k"> = 4455;</span></div>
<div class="ln" style="top:566px">21</div><div class="dot" style="top:568.0px"></div><div class="cl" style="top:566px">  <span class="r">v8</span><span class="k"> = 6677;</span></div>
<div class="ln" style="top:586px">22</div><div class="dot" style="top:588.0px"></div><div class="cl" style="top:586px">  <span class="r">v9</span><span class="k"> = 8899;</span></div>
<div class="ln" style="top:606px">23</div><div class="dot" style="top:608.0px"></div><div class="cl" style="top:606px"><span class="k">  *</span><span class="h">a1</span><span class="k"> = 2233;</span></div>
<div class="ln" style="top:626px">24</div><div class="dot" style="top:628.0px"></div><div class="cl" style="top:626px">  <span class="h h24">a1</span><span class="k">[1] = </span><span class="r">v7</span><span class="k">;</span></div>
<div class="ln" style="top:646px">25</div><div class="dot" style="top:648.0px"></div><div class="cl" style="top:646px">  <span class="h">a1</span><span class="k">[2] = </span><span class="r">v8</span><span class="k">;</span></div>
<div class="ln" style="top:666px">26</div><div class="dot" style="top:668.0px"></div><div class="cl" style="top:666px">  <span class="h">a1</span><span class="k">[3] = </span><span class="r">v9</span><span class="k">;</span></div>
<div class="ln" style="top:686px">27</div><div class="dot" style="top:688.0px"></div><div class="cl" style="top:686px"><span class="k">  return </span><span class="f">sub_140011311</span><span class="k">(</span><span class="r">v4</span><span class="k">, &amp;</span><span class="f">unk_14001AD00</span><span class="k">);</span></div>
<div class="ln" style="top:706px">28</div><div class="dot" style="top:708.0px"></div><div class="cl" style="top:706px"><span class="k">}</span></div>
<div class="abs" style="left:373.3px;top:523px;width:242.8px;height:168.4px;border:4px solid #fd1c10;border-radius:4.5px"></div>
<!-- SECTION:status -->
<div class="abs" style="left:378px;top:845px;width:1243px;height:21px;background:#f0f0f0"></div>
<div class="abs mono" style="left:381px;top:845.6px;font-size:12.9px;letter-spacing:1.26px;line-height:21px;white-space:pre;color:#000">00000C61</div>
<div class="abs mono" style="left:458.5px;top:845.6px;font-size:12.9px;letter-spacing:1.26px;line-height:21px;white-space:pre;color:#000">sub_1400117D0:24 (140011861)</div>
<div class="abs" style="left:453px;top:846px;width:1px;height:18px;background:#c8c8c8"></div><div class="abs" style="left:711px;top:846px;width:1px;height:18px;background:#c8c8c8"></div><div class="abs" style="left:726px;top:846px;width:1px;height:18px;background:#c8c8c8"></div>
<div class="abs" style="left:0;top:868px;width:1621px;height:21px;background:#f0f0f0"></div>
<div class="abs mono" style="left:2px;top:868.8px;font-size:12.9px;letter-spacing:1.26px;line-height:21px;white-space:pre;color:#000">AU:  idle</div>
<div class="abs mono" style="left:107px;top:868.8px;font-size:12.9px;letter-spacing:1.26px;line-height:21px;white-space:pre;color:#000">Down</div>
<div class="abs mono" style="left:183px;top:868.8px;font-size:12.9px;letter-spacing:1.26px;line-height:21px;white-space:pre;color:#000">磁盘: 32GB</div>
<div class="abs" style="left:102px;top:869px;width:1px;height:18px;background:#c8c8c8"></div><div class="abs" style="left:178px;top:869px;width:1px;height:18px;background:#c8c8c8"></div><div class="abs" style="left:268px;top:869px;width:1px;height:18px;background:#c8c8c8"></div>
<!-- SECTION:taskbar -->
<div class="abs" style="left:0;top:889px;width:1621px;height:50px;background:#060f13"></div>
<div class="abs" style="left:187px;top:889px;width:61px;height:50px;background:#363c3f"></div>
<div class="abs" style="left:130px;top:936.5px;width:40.5px;height:3px;background:#76b9ed"></div><div class="abs" style="left:170.5px;top:936.5px;width:10.5px;height:3px;background:#4a7fa8"></div>
<div class="abs" style="left:187px;top:936.5px;width:61px;height:3px;background:#76b9ed"></div>
<svg class="abs" style="left:0;top:889px" width="1621" height="50" viewBox="0 889 1621 50">
<defs><linearGradient id="ffg" x1="0.8" y1="0.05" x2="0.3" y2="1"><stop offset="0" stop-color="#fff44f"/><stop offset="0.3" stop-color="#ffb01e"/><stop offset="0.6" stop-color="#ff6a1e"/><stop offset="0.85" stop-color="#ff3647"/><stop offset="1" stop-color="#e31587"/></linearGradient>
<linearGradient id="fold" x1="0" y1="0" x2="0" y2="1"><stop offset="0" stop-color="#ffe89a"/><stop offset="1" stop-color="#f8d060"/></linearGradient></defs>
<!-- windows logo -->
<path d="M20 907l8.8-1.3v8.5H20zM29.8 905.5l10.400-1.5v10.2H29.8zM20 915.2h8.8v8.5L20 922.400zM29.8 915.2h10.400v10.2l-10.400-1.5z" fill="#fff"/>
<!-- firefox -->
<path d="M97 899C98 902 102 904 104 908C104.5 906 104.5 904.5 104 903C106.5 906 107.5 910 107.2 914C106.8 922 100.5 927.6 93 927.6C85 927.6 78.6 921.5 78.6 913.5C78.6 909 80.5 905.5 83 903.5C83 905 83.5 906.5 84.5 907.5C86 905 88 903.5 90.5 903C93.5 902.3 96.5 901.5 97 899Z" fill="url(#ffg)"/>
<circle cx="92.7" cy="913.7" r="6.4" fill="#7a3ff0"/><path d="M86.4 913c1-4 5-6 9-4.5 2 .8 3.5 2.5 3.7 4.5-2-2-5-2.5-7-1-1.5 1-3.5 1.5-5.7 1z" fill="#b060ff" opacity="0.8"/>
<path d="M83.5 908.5c2-.5 4 0 5.5 1.200 1.5-1 4-1 6 0-2 0-3.5 1-4 2.5-.5 1.5-2 2.300-3.5 2-2-.5-3.800-3-4-5.7z" fill="#ffb024"/>
<!-- folder -->
<path d="M141 902.5q0-.8.8-.8h10.5q.6 0 1 .5l1.7 2h12.8q.8 0 .8.8V924.2H141z" fill="#f2c247"/><rect x="141" y="905" width="27.6" height="19.2" fill="url(#fold)"/>
<rect x="143.5" y="903.2" width="5.5" height="1.4" fill="#fff"/><rect x="143.5" y="903.2" width="1.5" height="1.4" fill="#38b6ee"/>
<path d="M145.8 924.8v-9q0-1.8 1.8-1.8h14.6q1.8 0 1.8 1.8v9h-4.7v-6.2h-8.6v6.2z" fill="#29b2f2"/>
<!-- IDA -->
<g transform="translate(202,899)"><g transform="scale(1.0)"><ellipse cx="13" cy="9.5" rx="11" ry="9" fill="#1e1410"/><ellipse cx="24" cy="12.5" rx="5.2" ry="6.3" fill="#1a110d"/><path d="M17 8c4 2 6 8 5 15l-6 1z" fill="#1e1410"/><path d="M4.5 29.8c1.5-4 5-5 8-6.5l5.5-1.5c2 4 7 5 10 8z" fill="#c9a48c"/><ellipse cx="10.2" cy="15" rx="6.3" ry="8.8" fill="#d8b49c"/><path d="M4.5 10c2-4 8-5 12-2l1 5c-2-3-6-4-9-3.5z" fill="#2a1a14"/><ellipse cx="7.5" cy="13.5" rx="1.3" ry="0.7" fill="#4a3428"/><ellipse cx="12.5" cy="13.5" rx="1.3" ry="0.7" fill="#4a3428"/><path d="M8.5 20.3h3" stroke="#a0503c" stroke-width="0.9"/></g><text x="11" y="27.6" font-family="Liberation Sans,sans-serif" font-size="14.3" fill="#d82408">64</text></g>
<!-- tray -->
<path d="M1382.5 918l7.5-7.5 7.5 7.5" fill="none" stroke="#fff" stroke-width="1.3"/>
<path d="M1410 911.5h3.5l4.5-4.5v14.5l-4.5-4.5H1410z" fill="none" stroke="#fff" stroke-width="1.2"/>
<path d="M1420.5 911.5c1.2 1.5 1.2 4 0 5.5" fill="none" stroke="#fff" stroke-width="1.1"/><path d="M1423.5 909c2.5 3 2.5 8 0 10.5" fill="none" stroke="#9aa" stroke-width="1.1"/><path d="M1426.5 906.5c4 4.5 4 11 0 15.5" fill="none" stroke="#566" stroke-width="1.1"/>
<path d="M1442.5 907.5h17v11h-17zM1442.5 907.5v14M1448 921.5h8M1452 918.5v3" fill="none" stroke="#fff" stroke-width="1"/><rect x="1441" y="908" width="4" height="4" fill="#060f13" stroke="#fff" stroke-width="1"/>
<path d="M1470.5 904.5h19v15h-7l-2.5 2.5-2.5-2.5h-7z" fill="none" stroke="#fff" stroke-width="1.2"/><path d="M1474 908.5h12M1474 911.5h12M1474 914.5h8" stroke="#fff" stroke-width="1"/>
<rect x="1616.5" y="889" width="1" height="50" fill="#5a6468"/>
</svg>
<div class="abs" style="left:1501px;top:902px;font-size:17.5px;line-height:24px;color:#fff;font-family:'Noto Sans CJK SC',sans-serif">英</div>
<div class="abs" style="left:1527px;top:892.5px;width:84px;text-align:center;font-size:15.5px;letter-spacing:0.4px;line-height:20px;color:#fff">21:28</div>
<div class="abs" style="left:1523px;top:913.5px;width:92px;text-align:center;font-size:15.5px;letter-spacing:0.85px;line-height:20px;color:#fff">2023/11/19</div>
</body></html>
